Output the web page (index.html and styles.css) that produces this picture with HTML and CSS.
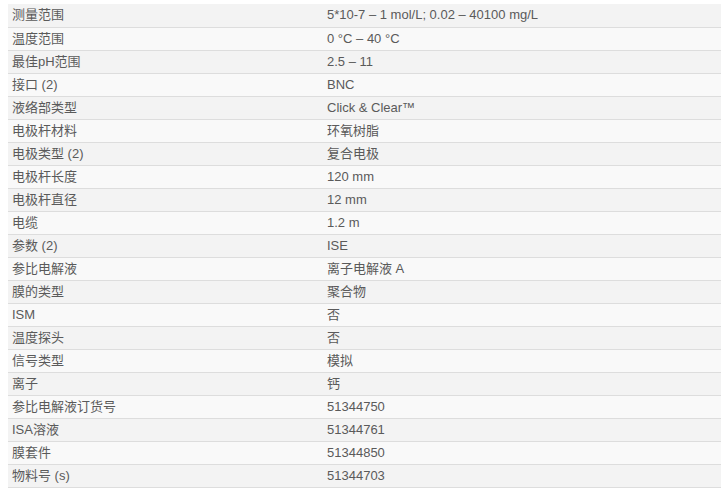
FILE: index.html
```html
<!DOCTYPE html>
<html lang="zh">
<head>
<meta charset="utf-8">
<link rel="stylesheet" href="styles.css">
</head>
<body>
<table class="spec">
<tbody>
<tr><td class="k">测量范围</td><td class="v">5*10-7 – 1 mol/L; 0.02 – 40100 mg/L</td></tr>
<tr><td class="k">温度范围</td><td class="v">0 °C – 40 °C</td></tr>
<tr><td class="k">最佳pH范围</td><td class="v">2.5 – 11</td></tr>
<tr><td class="k">接口 (2)</td><td class="v">BNC</td></tr>
<tr><td class="k">液络部类型</td><td class="v">Click &amp; Clear™</td></tr>
<tr><td class="k">电极杆材料</td><td class="v">环氧树脂</td></tr>
<tr><td class="k">电极类型 (2)</td><td class="v">复合电极</td></tr>
<tr><td class="k">电极杆长度</td><td class="v">120 mm</td></tr>
<tr><td class="k">电极杆直径</td><td class="v">12 mm</td></tr>
<tr><td class="k">电缆</td><td class="v">1.2 m</td></tr>
<tr><td class="k">参数 (2)</td><td class="v">ISE</td></tr>
<tr><td class="k">参比电解液</td><td class="v">离子电解液 A</td></tr>
<tr><td class="k">膜的类型</td><td class="v">聚合物</td></tr>
<tr><td class="k">ISM</td><td class="v">否</td></tr>
<tr><td class="k">温度探头</td><td class="v">否</td></tr>
<tr><td class="k">信号类型</td><td class="v">模拟</td></tr>
<tr><td class="k">离子</td><td class="v">钙</td></tr>
<tr><td class="k">参比电解液订货号</td><td class="v">51344750</td></tr>
<tr><td class="k">ISA溶液</td><td class="v">51344761</td></tr>
<tr><td class="k">膜套件</td><td class="v">51344850</td></tr>
<tr><td class="k">物料号 (s)</td><td class="v">51344703</td></tr>
</tbody>
</table>
</body>
</html>
```
FILE: styles.css
```css
html, body {
  margin: 0;
  padding: 0;
  overflow: hidden;
  background: #fff;
}
body {
  padding: 4px 0 0 8px;
  font-family: "Liberation Sans", Arial, "Noto Sans CJK SC", sans-serif;
  font-size: 13px;
  color: #5a5a5a;
}
.spec {
  border-collapse: collapse;
  width: 713px;
  table-layout: fixed;
}
.spec tr {
  height: 23px;
  border-bottom: 1px solid #dddddd;
}
.spec tr:nth-child(odd) {
  background: #f3f3f3;
}
.spec tr:nth-child(even) {
  background: #f9f9f9;
}
.spec td {
  padding: 0 4px 1px;
  height: 21px;
  line-height: 21px;
  vertical-align: middle;
  white-space: nowrap;
}
.spec .k {
  width: 307px;
}
```
